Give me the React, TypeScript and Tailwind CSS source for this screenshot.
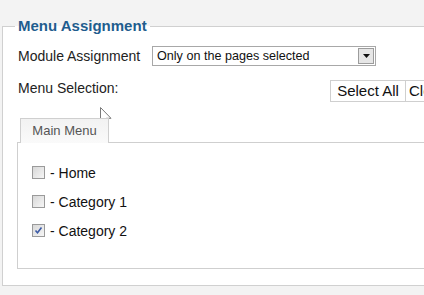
import React from 'react';

const items = [
  { label: '- Home', checked: false },
  { label: '- Category 1', checked: false },
  { label: '- Category 2', checked: true },
];

const Checkbox: React.FC<{ checked: boolean }> = ({ checked }) => (
  <span className="relative flex h-[13px] w-[13px] shrink-0 items-center justify-center border border-[#9a9a9a] bg-gradient-to-br from-[#d8d8d8] to-[#f6f6f6]">
    {checked && (
      <svg width="9" height="9" viewBox="0 0 9 9">
        <path d="M1.5 4.5 L3.5 6.8 L7.5 1.5" fill="none" stroke="#3b5aa6" strokeWidth="1.6" />
      </svg>
    )}
  </span>
);

export default function App() {
  return (
    <div
      className="relative h-[295px] w-[424px] overflow-hidden bg-[#f3f3f3] pl-[2px] pt-[17px]"
      style={{ fontFamily: '"Liberation Sans", Arial, sans-serif' }}
    >
      <fieldset className="w-[600px] border border-[#d0d0d0] bg-white pb-[16px] pl-[15px] pt-[11px]">
        <legend className="-ml-[3px] px-[3px] text-[15px] font-bold leading-[18px] text-[#1f5d8e]">
          Menu Assignment
        </legend>

        {/* module assignment */}
        <div className="flex items-center">
          <span className="w-[134px] text-[14px] leading-[16px] text-[#222]">Module Assignment</span>
          <div className="flex h-[20px] w-[224px] items-center border border-[#a8a8a8] bg-white">
            <span className="flex-1 pl-[4px] text-[12.6px] leading-[16px] text-[#111]">Only on the pages selected</span>
            <span className="mr-[1px] flex h-[16px] w-[16px] items-center justify-center border border-[#9c9c9c] bg-[#e6e6e6]">
              <svg width="7" height="4" viewBox="0 0 7 4">
                <path d="M0 0 H7 L3.5 4 Z" fill="#111" />
              </svg>
            </span>
          </div>
        </div>

        {/* menu selection */}
        <div className="mt-[14px] flex items-start">
          <span className="w-[312px] text-[14px] leading-[16px] text-[#222]">Menu Selection:</span>
          <div className="flex whitespace-nowrap">
            <button className="h-[22px] w-[76px] border border-[#cfcfcf] bg-white text-[15px] leading-[20px] text-[#111]">
              Select All
            </button>
            <button className="h-[22px] border border-l-0 border-[#cfcfcf] bg-white px-[3px] text-left text-[15px] leading-[20px] text-[#111]">
              Clear
            </button>
          </div>
        </div>

        {/* tabs */}
        <div className="mt-[16px] pl-[2px]">
          <div className="relative z-10 -mb-[1px] flex h-[25px] w-[89px] items-center justify-center border border-b-0 border-[#cfcfcf] bg-gradient-to-b from-[#f2f2f2] to-[#fafafa] text-[13px] text-[#555]">
            Main Menu
          </div>
        </div>
        <div className="-ml-[1px] h-[127px] border border-[#cfcfcf] bg-white pl-[14px] pt-[15px]">
          {items.map((item) => (
            <div key={item.label} className="flex h-[29px] items-center gap-[5px]">
              <Checkbox checked={item.checked} />
              <span className="text-[14px] leading-[16px] text-[#111]">{item.label}</span>
            </div>
          ))}
        </div>
      </fieldset>

      {/* mouse pointer */}
      <svg className="absolute left-[100px] top-[107px]" width="12" height="19" viewBox="0 0 12 19">
        <path d="M0.5 0.5 L0.5 15.5 L4 12 L6.5 17.8 L8.6 16.9 L6.2 11.3 L11 11.3 Z" fill="#fff" stroke="#7a7a7a" strokeWidth="1" />
      </svg>
    </div>
  );
}
